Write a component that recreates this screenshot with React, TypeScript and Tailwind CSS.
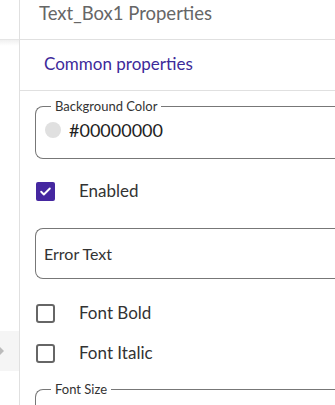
const font = { fontFamily: "Lato, 'Open Sans', sans-serif" };

const Check = ({ checked, label }: { checked?: boolean; label: string }) => (
  <div className="flex items-center h-[20px]">
    {checked ? (
      <div className="w-[19px] h-[19px] rounded-[2px] bg-[#4527a0] flex items-center justify-center">
        <svg width="13" height="13" viewBox="0 0 24 24" fill="none" stroke="white" strokeWidth="3.5" strokeLinecap="round" strokeLinejoin="round">
          <path d="M4 12.5l5 5L20 6.5" />
        </svg>
      </div>
    ) : (
      <div className="w-[19px] h-[19px] rounded-[3px] border-2 border-[#666]" />
    )}
    <span className="ml-[24px] text-[17px] text-[#333]">{label}</span>
  </div>
);

const Fieldset = ({ legend, children, h }: { legend: string; children?: React.ReactNode; h: string }) => (
  <fieldset className={`shrink-0 border border-[#777] rounded-[8px] rounded-r-none border-r-0 pl-[9px] ${h}`}>
    <legend className="text-[13px] text-[#333] px-[4px] ml-[6px] leading-[14px]">{legend}</legend>
    {children}
  </fieldset>
);

export default function App() {
  return (
    <div className="w-[335px] h-[405px] bg-white flex overflow-hidden" style={font}>
      <div className="w-[20px] shrink-0 flex flex-col border-r border-[#e0e0e0]">
        <div className="h-[40px] shrink-0 border-b border-[#e5e5e5]" />
        <div className="h-[6px] shrink-0 bg-gradient-to-b from-[#f0f0f0] to-white" />
        <div className="h-[285px] shrink-0" />
        <div className="h-[40px] shrink-0 bg-[#f5f5f5] flex items-center">
          <div className="w-0 h-0 border-y-[4px] border-y-transparent border-l-[4px] border-l-[#bbb]" />
        </div>
      </div>
      <div className="flex-1 flex flex-col min-w-0">
        <div className="h-[40px] shrink-0 border-b border-[#e0e0e0] flex items-center pl-[19px] pb-[11px]">
          <span className="text-[18.5px] text-[#666]">Text_Box1 Properties</span>
        </div>
        <div className="h-[51px] shrink-0 border-b border-[#e0e0e0] flex items-center pl-[24px] pb-[2px]">
          <span className="text-[17px] text-[#3d2a9a]">Common properties</span>
        </div>
        <div className="pl-[15px] pt-[8px] flex flex-col shrink-0">
          <Fieldset legend="Background Color" h="h-[60px]">
            <div className="flex items-center h-[34px]">
              <div className="w-[16px] h-[16px] rounded-full bg-[#e0e0e0]" />
              <span className="ml-[8px] text-[18px] text-[#222]">#00000000</span>
            </div>
          </Fieldset>
          <div className="mt-[22px] ml-[1px] shrink-0">
            <Check checked label="Enabled" />
          </div>
          <div className="mt-[27px] shrink-0 h-[51px] border border-[#777] border-r-0 rounded-l-[8px] flex items-center pl-[8px]">
            <span className="text-[16px] text-[#333]">Error Text</span>
          </div>
          <div className="mt-[24px] ml-[1px] shrink-0">
            <Check label="Font Bold" />
          </div>
          <div className="mt-[20px] ml-[1px] shrink-0">
            <Check label="Font Italic" />
          </div>
          <div className="mt-[19px] shrink-0">
            <Fieldset legend="Font Size" h="h-[40px]" />
          </div>
        </div>
      </div>
    </div>
  );
}
